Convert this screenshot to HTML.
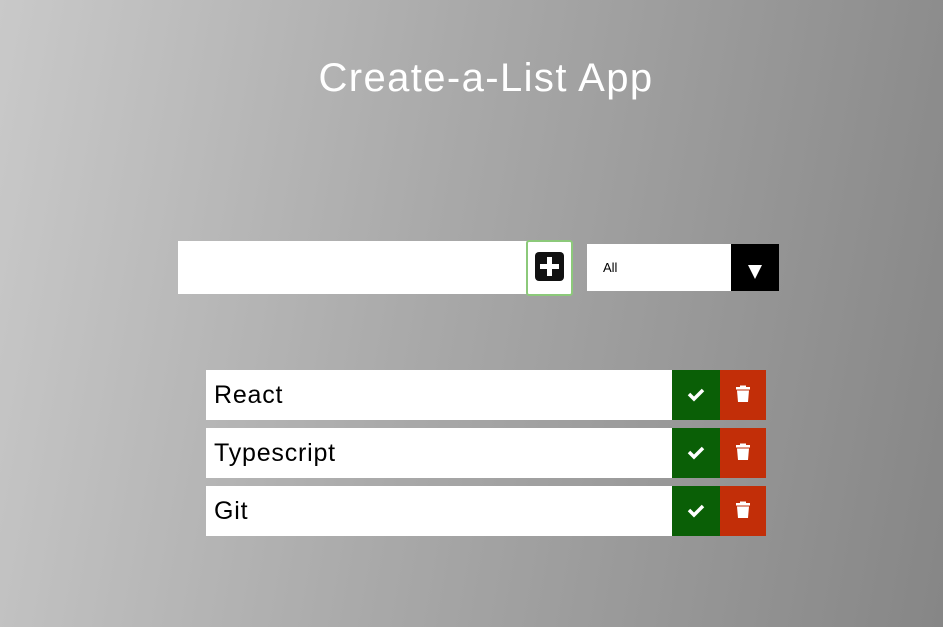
<!DOCTYPE html>
<html><head><style>
body{margin:0;width:943px;height:627px;overflow:hidden;background:linear-gradient(100deg,#c9c9c9 0%,#a9a9a9 45%,#868686 100%);font-family:"Liberation Sans",sans-serif;position:relative}
h1{position:absolute;top:56px;left:0;width:972px;text-align:center;margin:0;color:#fff;font-weight:400;font-size:40px;letter-spacing:1.4px}
.inp{position:absolute;left:178px;top:241px;width:349px;height:53px;background:#fff}
.btn{position:absolute;left:526px;top:240px;width:43px;height:52px;border:2px solid #8cc97a;border-radius:3px;background:#fff}
.plus{position:absolute;left:7px;top:10px;width:29px;height:29px;background:#111;border-radius:4px}
.plus:before{content:"";position:absolute;left:12px;top:5px;width:5px;height:19px;background:#fff}
.plus:after{content:"";position:absolute;left:5px;top:12px;width:19px;height:5px;background:#fff}
.sel{position:absolute;left:587px;top:244px;width:192px;height:47px;background:#fff;font-size:13px}
.sel span{position:absolute;left:16px;top:16px}
.arr{position:absolute;right:0;top:0;width:48px;height:47px;background:#000}
.arr:after{content:"";position:absolute;left:17px;top:21px;border-left:7px solid transparent;border-right:7px solid transparent;border-top:14px solid #fff}
.item{position:absolute;left:206px;width:560px;height:50px;background:#fff}
.item span{position:absolute;left:8px;top:11px;font-size:25px;letter-spacing:0.8px;color:#000}
.ck{position:absolute;left:466px;top:0;width:48px;height:50px;background:#0a5f06}
.tr{position:absolute;left:514px;top:0;width:46px;height:50px;background:#c22e08}
</style></head><body>
<h1>Create-a-List App</h1>
<div class="inp"></div>
<div class="btn"><div class="plus"></div></div>
<div class="sel"><span>All</span><div class="arr"></div></div>
<div class="item" style="top:370px"><span>React</span><div class="ck"><svg width="48" height="50"><path d="M17 24l5 5 9-9" stroke="#fff" stroke-width="3.5" fill="none"/></svg></div><div class="tr"><svg width="46" height="50"><rect x="16" y="17" width="14" height="2.5" fill="#fff"/><rect x="20" y="15.5" width="6" height="2" fill="#fff"/><path d="M17 20.5h12l-1 11.5h-10z" fill="#fff"/></svg></div></div>
<div class="item" style="top:428px"><span>Typescript</span><div class="ck"><svg width="48" height="50"><path d="M17 24l5 5 9-9" stroke="#fff" stroke-width="3.5" fill="none"/></svg></div><div class="tr"><svg width="46" height="50"><rect x="16" y="17" width="14" height="2.5" fill="#fff"/><rect x="20" y="15.5" width="6" height="2" fill="#fff"/><path d="M17 20.5h12l-1 11.5h-10z" fill="#fff"/></svg></div></div>
<div class="item" style="top:486px"><span>Git</span><div class="ck"><svg width="48" height="50"><path d="M17 24l5 5 9-9" stroke="#fff" stroke-width="3.5" fill="none"/></svg></div><div class="tr"><svg width="46" height="50"><rect x="16" y="17" width="14" height="2.5" fill="#fff"/><rect x="20" y="15.5" width="6" height="2" fill="#fff"/><path d="M17 20.5h12l-1 11.5h-10z" fill="#fff"/></svg></div></div>
</body></html>
